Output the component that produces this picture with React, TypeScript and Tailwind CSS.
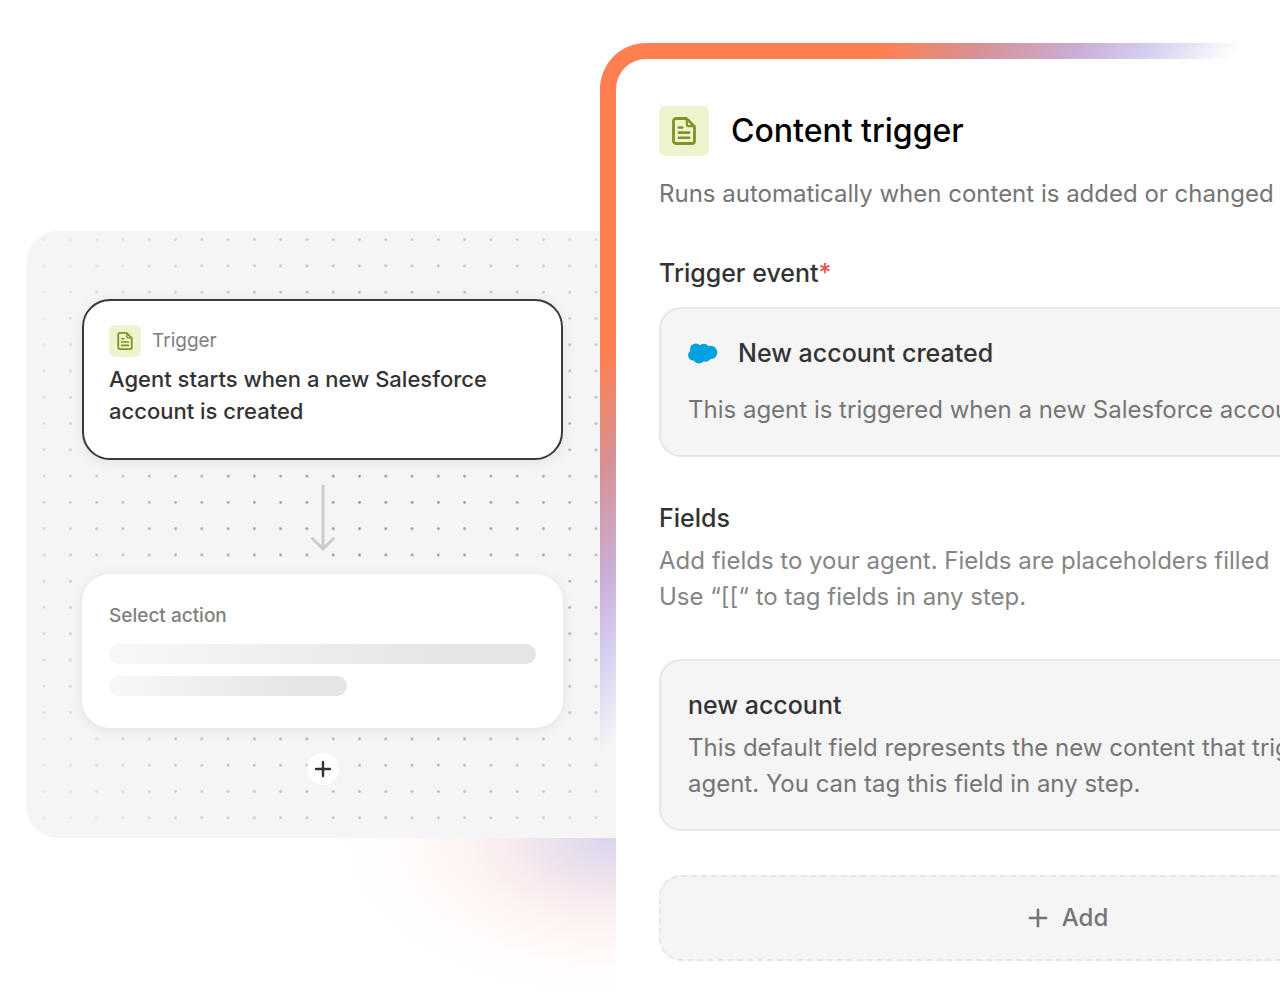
import { Plus } from 'lucide-react';

function DocIcon({ className }: { className?: string }) {
  return (
    <svg viewBox="0 0 24 28" fill="none" className={className} aria-hidden="true">
      <path
        d="M4 1.500h10.400L22.500 9.600V24a2.500 2.500 0 0 1-2.500 2.500H4A2.500 2.500 0 0 1 1.500 24V4A2.500 2.500 0 0 1 4 1.500Z"
        stroke="currentColor"
        strokeWidth="2.800"
        strokeLinejoin="round"
      />
      <path d="M14.800 2v5.200a2 2 0 0 0 2 2H22" stroke="currentColor" strokeWidth="2.200" />
      <path d="M6.800 10.500h3.400M6.800 15.600h10.400M6.800 20.800h10.400" stroke="currentColor" strokeWidth="2.600" strokeLinecap="round" />
    </svg>
  );
}

function CloudLogo() {
  return (
    <svg viewBox="0 0 30 21" className="w-[30px] h-[21px]" fill="#00a1e0" aria-hidden="true">
      <circle cx="7.800" cy="6.300" r="5.800" />
      <circle cx="15.800" cy="6.300" r="5.600" />
      <circle cx="22.600" cy="9.400" r="6.700" />
      <circle cx="5.300" cy="12.300" r="5.200" />
      <circle cx="11" cy="14.600" r="6" />
      <circle cx="17.600" cy="13" r="5.800" />
    </svg>
  );
}

function DotGrid() {
  return (
    <svg className="absolute inset-0 w-full h-full" aria-hidden="true">
      <defs>
        <pattern id="dots" x="5" y="-4.500" width="26.280" height="26.280" patternUnits="userSpaceOnUse">
          <circle cx="13.140" cy="13.140" r="1.400" fill="#959595" />
        </pattern>
        <radialGradient id="fade" cx="0.600" cy="0.500" r="0.680">
          <stop offset="0" stopColor="#fff" />
          <stop offset="0.400" stopColor="#fff" stopOpacity="0.850" />
          <stop offset="1" stopColor="#fff" stopOpacity="0.150" />
        </radialGradient>
        <mask id="dot-mask">
          <rect width="100%" height="100%" fill="url(#fade)" />
        </mask>
      </defs>
      <rect width="100%" height="100%" fill="url(#dots)" mask="url(#dot-mask)" />
    </svg>
  );
}

function WorkflowCanvas() {
  return (
    <div className="relative flex flex-col items-center rounded-l-[32px] bg-[#f5f5f5] pt-[68px] pb-[53px] pl-14 pr-[53px]">
      <DotGrid />

      {/* Trigger step */}
      <div className="relative w-full rounded-[28px] border-2 border-[#3a3a3a] bg-white px-[25px] pt-6 pb-[31px] shadow-[0_2px_14px_rgba(0,0,0,0.08)]">
        <div className="flex items-center gap-[11px]">
          <div className="flex size-8 items-center justify-center rounded-md bg-[#eef4cf] text-[#7f9425]">
            <DocIcon className="w-4 h-[18px]" />
          </div>
          <span className="text-[19px] text-[#808080]">Trigger</span>
        </div>
        <p className="mt-1.5 text-[22px] leading-8 font-medium text-[#333]">
          Agent starts when a new Salesforce account is created
        </p>
      </div>

      <svg viewBox="0 0 24 66" fill="none" className="relative mt-[25px] w-6 h-[66px]" aria-hidden="true">
        <path d="M12 1v63M1.500 53.500 12 64l10.500-10.500" stroke="#ccc" strokeWidth="3" strokeLinecap="round" strokeLinejoin="round" />
      </svg>

      {/* Empty step */}
      <div className="relative mt-[23px] w-full rounded-[28px] bg-white px-[27px] pt-7 pb-8 shadow-[0_2px_14px_rgba(0,0,0,0.08)]">
        <h3 className="text-[19px] leading-7 font-medium text-[#808080]">Select action</h3>
        <div className="mt-3.5 h-5 rounded-full bg-linear-to-r from-[#f8f8f8] to-[#e5e5e5] to-80%" />
        <div className="mt-3 h-5 w-[238px] rounded-full bg-linear-to-r from-[#f8f8f8] to-[#e5e5e5] to-80%" />
      </div>

      <button
        type="button"
        aria-label="Add step"
        className="relative mt-[25px] flex size-8 items-center justify-center rounded-full bg-white text-[#333]"
      >
        <Plus className="size-6" strokeWidth={2.4} />
      </button>
    </div>
  );
}

function TriggerPanel() {
  return (
    <div className="rounded-tl-[46px] pl-4 pt-4 flex flex-col flex-1 bg-[linear-gradient(132deg,#ff7f50_212px,#d69195_287px,#c9aed4_360px,#d6d0ef_415px,transparent_479px)]">
      <div className="flex-1 rounded-tl-[30px] bg-white px-[43px] pt-[47px] pb-10 text-[24px] leading-9 text-[#757575]">
        <div className="flex items-center gap-[22px]">
          <div className="flex size-[50px] items-center justify-center rounded-md bg-[#eef4cf] text-[#7f9425]">
            <DocIcon className="w-6 h-7" />
          </div>
          <h1 className="text-[32px] font-medium text-black">Content trigger</h1>
        </div>
        <p className="mt-5 whitespace-nowrap">Runs automatically when content is added or changed</p>

        <h2 className="mt-[43px] text-[25px] font-medium text-[#333]">
          Trigger event<span className="text-[#f0524f]">*</span>
        </h2>
        <div className="mt-4 rounded-[22px] border-2 border-[#e6e6e6] bg-[#f5f5f5] px-[27px] pt-[26px] pb-[27px]">
          <div className="flex items-center gap-5">
            <CloudLogo />
            <h3 className="text-[25px] font-medium text-[#333]">New account created</h3>
          </div>
          <p className="mt-[21px] whitespace-nowrap">This agent is triggered when a new Salesforce account</p>
        </div>

        <h2 className="mt-[43px] text-[25px] font-medium text-[#333]">Fields</h2>
        <p className="mt-[7px] whitespace-nowrap text-[#858585]">
          Add fields to your agent. Fields are placeholders filled
          <br />
          Use “[[“ to tag fields in any step.
        </p>
        <div className="mt-11 rounded-[22px] border-2 border-[#e6e6e6] bg-[#f5f5f5] px-[27px] pt-[26px] pb-[27px]">
          <h3 className="text-[25px] font-medium text-[#333]">new account</h3>
          <p className="mt-[7px] whitespace-nowrap">
            This default field represents the new content that triggers
            <br />
            agent. You can tag this field in any step.
          </p>
        </div>

        <button
          type="button"
          className="mt-11 flex h-[86px] w-full items-center justify-center gap-2.5 rounded-[22px] border-2 border-dashed border-[#e6e6e6] bg-[#f5f5f5] font-medium"
        >
          <Plus className="size-7" strokeWidth={2.2} />
          Add
        </button>
      </div>
    </div>
  );
}

export default function App() {
  return (
    <main className="flex min-h-screen overflow-hidden bg-white font-['Inter',sans-serif]">
      <div className="flex w-[616px] shrink-0 flex-col pl-[26px] pt-[231px]">
        <WorkflowCanvas />
        {/* Soft glow behind the panel corner */}
        <div className="ml-auto h-[163px] w-[280px] bg-[radial-gradient(278px_163px_at_top_right,#dcd3ec_0%,#e9dfed_20%,#f8ecee_40%,#fef5f3_58%,#fffcfb_80%,#fff_100%)]" />
      </div>
      <div className="relative -ml-4 -mr-[236px] mt-[43px] flex flex-1">
        <TriggerPanel />
      </div>
    </main>
  );
}
